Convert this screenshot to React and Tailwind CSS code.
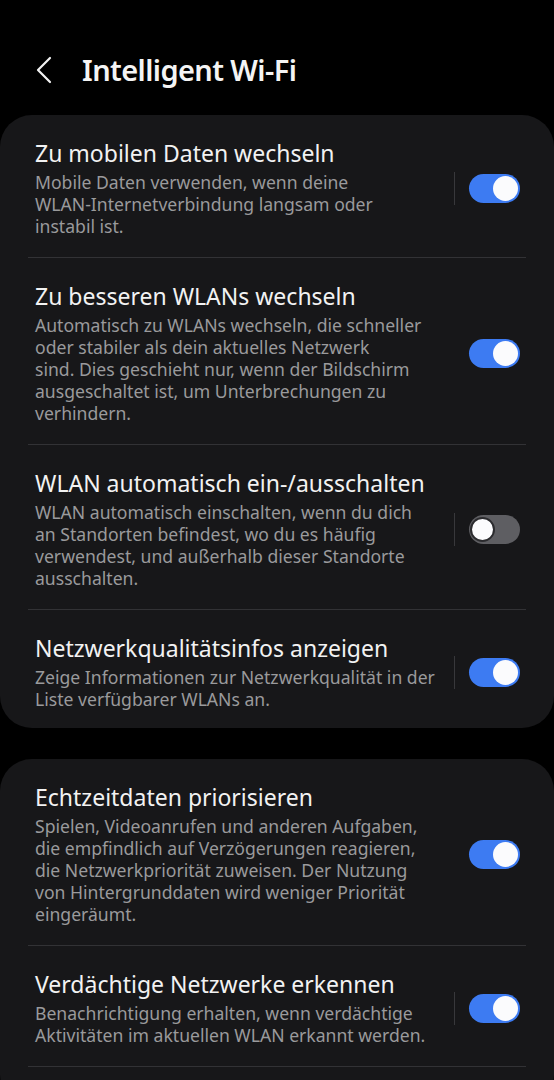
import React, { useState } from 'react';

const groups = [
  [
    {
      title: 'Zu mobilen Daten wechseln',
      lines: ['Mobile Daten verwenden, wenn deine', 'WLAN-Internetverbindung langsam oder', 'instabil ist.'],
      on: true,
      sep: true,
    },
    {
      title: 'Zu besseren WLANs wechseln',
      lines: [
        'Automatisch zu WLANs wechseln, die schneller',
        'oder stabiler als dein aktuelles Netzwerk',
        'sind. Dies geschieht nur, wenn der Bildschirm',
        'ausgeschaltet ist, um Unterbrechungen zu',
        'verhindern.',
      ],
      on: true,
      sep: false,
    },
    {
      title: 'WLAN automatisch ein-/ausschalten',
      lines: [
        'WLAN automatisch einschalten, wenn du dich',
        'an Standorten befindest, wo du es häufig',
        'verwendest, und außerhalb dieser Standorte',
        'ausschalten.',
      ],
      on: false,
      sep: true,
    },
    {
      title: 'Netzwerkqualitätsinfos anzeigen',
      lines: ['Zeige Informationen zur Netzwerkqualität in der', 'Liste verfügbarer WLANs an.'],
      on: true,
      sep: true,
    },
  ],
  [
    {
      title: 'Echtzeitdaten priorisieren',
      lines: [
        'Spielen, Videoanrufen und anderen Aufgaben,',
        'die empfindlich auf Verzögerungen reagieren,',
        'die Netzwerkpriorität zuweisen. Der Nutzung',
        'von Hintergrunddaten wird weniger Priorität',
        'eingeräumt.',
      ],
      on: true,
      sep: false,
    },
    {
      title: 'Verdächtige Netzwerke erkennen',
      lines: ['Benachrichtigung erhalten, wenn verdächtige', 'Aktivitäten im aktuellen WLAN erkannt werden.'],
      on: true,
      sep: true,
    },
  ],
];

const Toggle = ({ on, onClick }) => (
  <button
    onClick={onClick}
    className={`relative w-[51px] h-[29px] rounded-full shrink-0 ${on ? 'bg-[#3d7bf2]' : 'bg-[#5e5e62]'}`}
  >
    <span
      className={`absolute top-[2px] w-[25px] h-[25px] rounded-full bg-[#fbfbfd] ${
        on ? 'right-[2px]' : 'left-[1px] border-2 border-[#2b2b2e]'
      }`}
    />
  </button>
);

const Row = ({ item, last }) => {
  const [on, setOn] = useState(item.on);
  return (
    <div
      className={`flex items-center pl-[7px] pr-[6px] pt-[24px] ${
        last ? 'pb-[18px]' : 'pb-[20px] border-b border-[#323235]'
      }`}
    >
      <div className="flex-1 min-w-0">
        <div className="text-[23px] leading-[28px] text-[#f2f2f2] mb-[4px] whitespace-nowrap">{item.title}</div>
        <div className="text-[17.6px] leading-[22px] text-[#9a9a9c]">
          {item.lines.map((l, i) => (
            <div key={i} className="whitespace-nowrap">{l}</div>
          ))}
        </div>
      </div>
      <div className="flex items-center gap-[14px] ml-[10px]">
        <div className={`w-px h-[33px] ${item.sep ? 'bg-[#38383b]' : 'bg-transparent'}`} />
        <Toggle on={on} onClick={() => setOn(!on)} />
      </div>
    </div>
  );
};

export default function App() {
  return (
    <div className="min-h-screen bg-black pb-10" style={{ fontFamily: '"Noto Sans", Roboto, sans-serif' }}>
      <div className="h-[115px] pt-[50px] pl-[34px]">
        <div className="flex items-center h-[40px]">
          <svg width="22" height="28" viewBox="0 0 22 28" fill="none" stroke="#f2f2f2" strokeWidth="2.2" strokeLinecap="round" strokeLinejoin="round">
            <path d="M16 2 L4 14 L16 26" />
          </svg>
          <h1 className="ml-[26px] text-[29px] font-semibold text-[#f4f4f4] tracking-[-0.6px]">Intelligent Wi-Fi</h1>
        </div>
      </div>
      <div className="flex flex-col gap-[31px]">
        {groups.map((g, gi) => (
          <div key={gi} className={`bg-[#171719] rounded-[32px] px-[28px] ${gi === 1 ? 'pb-[40px]' : ''}`}>
            {g.map((item, i) => (
              <Row key={i} item={item} last={gi === 0 && i === g.length - 1} />
            ))}
          </div>
        ))}
      </div>
    </div>
  );
}
